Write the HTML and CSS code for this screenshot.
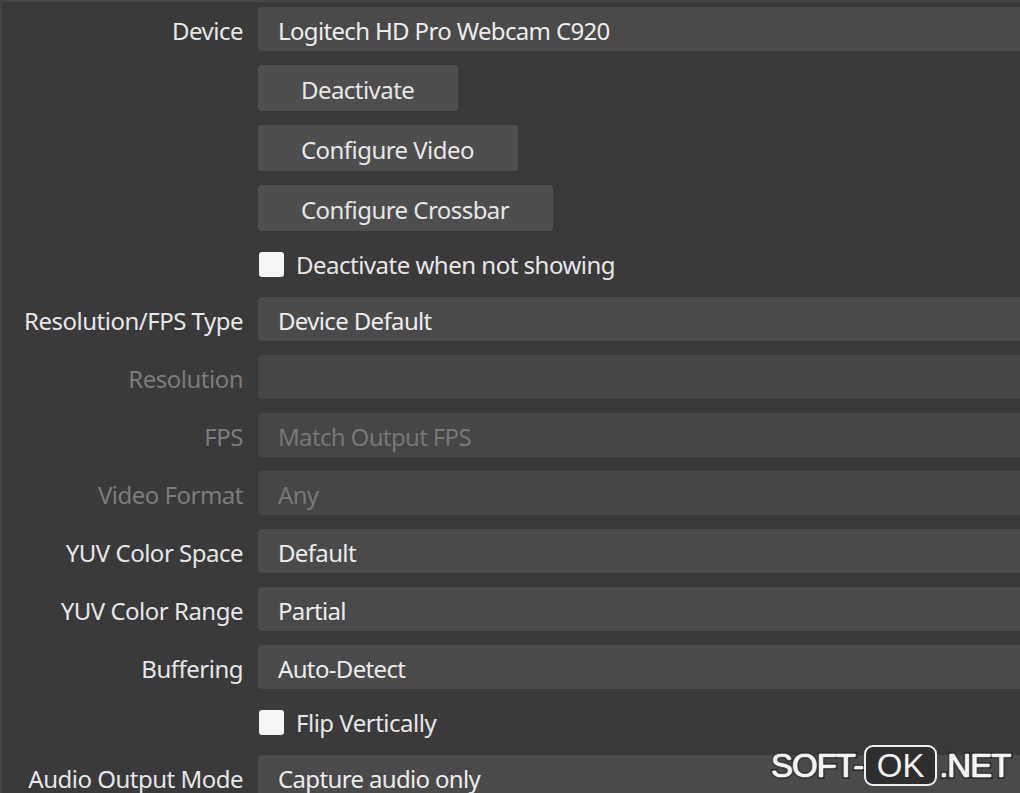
FILE: index.html
```html
<!DOCTYPE html>
<html lang="en">
<head>
<meta charset="utf-8">
<title>Video Capture Device Properties</title>
<link rel="stylesheet" href="styles.css">
</head>
<body>
<div class="window">
  <div class="form">
    <div class="label">Device</div>
    <div class="combo">Logitech HD Pro Webcam C920</div>

    <div class="label"></div>
    <div class="btnrow"><button class="btn">Deactivate</button></div>

    <div class="label"></div>
    <div class="btnrow"><button class="btn">Configure Video</button></div>

    <div class="label"></div>
    <div class="btnrow"><button class="btn">Configure Crossbar</button></div>

    <div class="label"></div>
    <label class="check"><span class="box"></span><span>Deactivate when not showing</span></label>

    <div class="label">Resolution/FPS Type</div>
    <div class="combo">Device Default</div>

    <div class="label disabled">Resolution</div>
    <div class="combo disabled"></div>

    <div class="label disabled">FPS</div>
    <div class="combo disabled">Match Output FPS</div>

    <div class="label disabled">Video Format</div>
    <div class="combo disabled">Any</div>

    <div class="label">YUV Color Space</div>
    <div class="combo">Default</div>

    <div class="label">YUV Color Range</div>
    <div class="combo">Partial</div>

    <div class="label">Buffering</div>
    <div class="combo">Auto-Detect</div>

    <div class="label"></div>
    <label class="check"><span class="box"></span><span>Flip Vertically</span></label>

    <div class="label">Audio Output Mode</div>
    <div class="combo">Capture audio only</div>
  </div>

  <div class="watermark">
    <span class="wm-text">SOFT-</span><span class="wm-ok">OK</span><span class="wm-text">.NET</span>
  </div>
</div>
</body>
</html>
```

FILE: styles.css
```css
html, body {
  margin: 0;
  padding: 0;
  width: 1020px;
  height: 793px;
  overflow: hidden;
  background: #3a3a3a;
}

.window {
  position: relative;
  width: 1020px;
  height: 793px;
  box-sizing: border-box;
  border-top: 2px solid #474747;
  border-left: 2px solid #444444;
  background: #3a3a3a;
  overflow: hidden;
  font-family: "Noto Sans", "Open Sans", sans-serif;
  font-size: 24px;
  color: #e8e8e8;
}

.form {
  display: grid;
  grid-template-columns: 241px 800px;
  column-gap: 15px;
  row-gap: 14px;
  padding-top: 5px;
  align-items: center;
}

.label {
  text-align: right;
  white-space: nowrap;
  letter-spacing: -0.5px;
  color: #e6e6e6;
  padding-top: 2px;
}

.label.disabled {
  color: #7b7b7b;
}

.combo {
  height: 44px;
  box-sizing: border-box;
  background: #4a4a4a;
  border-radius: 4px;
  padding-left: 20px;
  padding-top: 2px;
  display: flex;
  align-items: center;
  white-space: nowrap;
  letter-spacing: -0.65px;
  color: #ececec;
}

.combo.disabled {
  background: #464646;
  color: #767676;
}

.btnrow {
  display: flex;
}

.btn {
  height: 46px;
  padding: 2px 44px 0 43px;
  border: none;
  border-radius: 4px;
  background: #4e4e4e;
  color: #e6e6e6;
  font-family: inherit;
  font-size: 24px;
  letter-spacing: -0.55px;
}

.check {
  display: flex;
  align-items: center;
  gap: 12px;
  height: 38px;
  padding-left: 1px;
  white-space: nowrap;
  letter-spacing: -0.5px;
  color: #e6e6e6;
}

.box {
  width: 25px;
  height: 25px;
  border-radius: 3px;
  background: #f6f6f6;
  flex: none;
}

.watermark {
  position: absolute;
  left: 769px;
  top: 743px;
  display: flex;
  align-items: center;
  font-family: "Liberation Sans", Arial, sans-serif;
}

.wm-text {
  font-size: 33px;
  color: #f4f4f4;
  -webkit-text-stroke: 4px #2a2a2a;
  paint-order: stroke fill;
  text-shadow: 0 0 1.5px #f0f0f0, 0 0 1px #f0f0f0, 0 0 1px #f0f0f0;
  letter-spacing: -1px;
}

.wm-ok {
  margin: 0 2px 0 1px;
  width: 73px;
  height: 41px;
  box-sizing: border-box;
  border: 2px solid #f0f0f0;
  border-radius: 9px;
  background: #2e2e2e;
  color: #f2f2f2;
  font-size: 33px;
  display: flex;
  align-items: center;
  justify-content: center;
}
```
